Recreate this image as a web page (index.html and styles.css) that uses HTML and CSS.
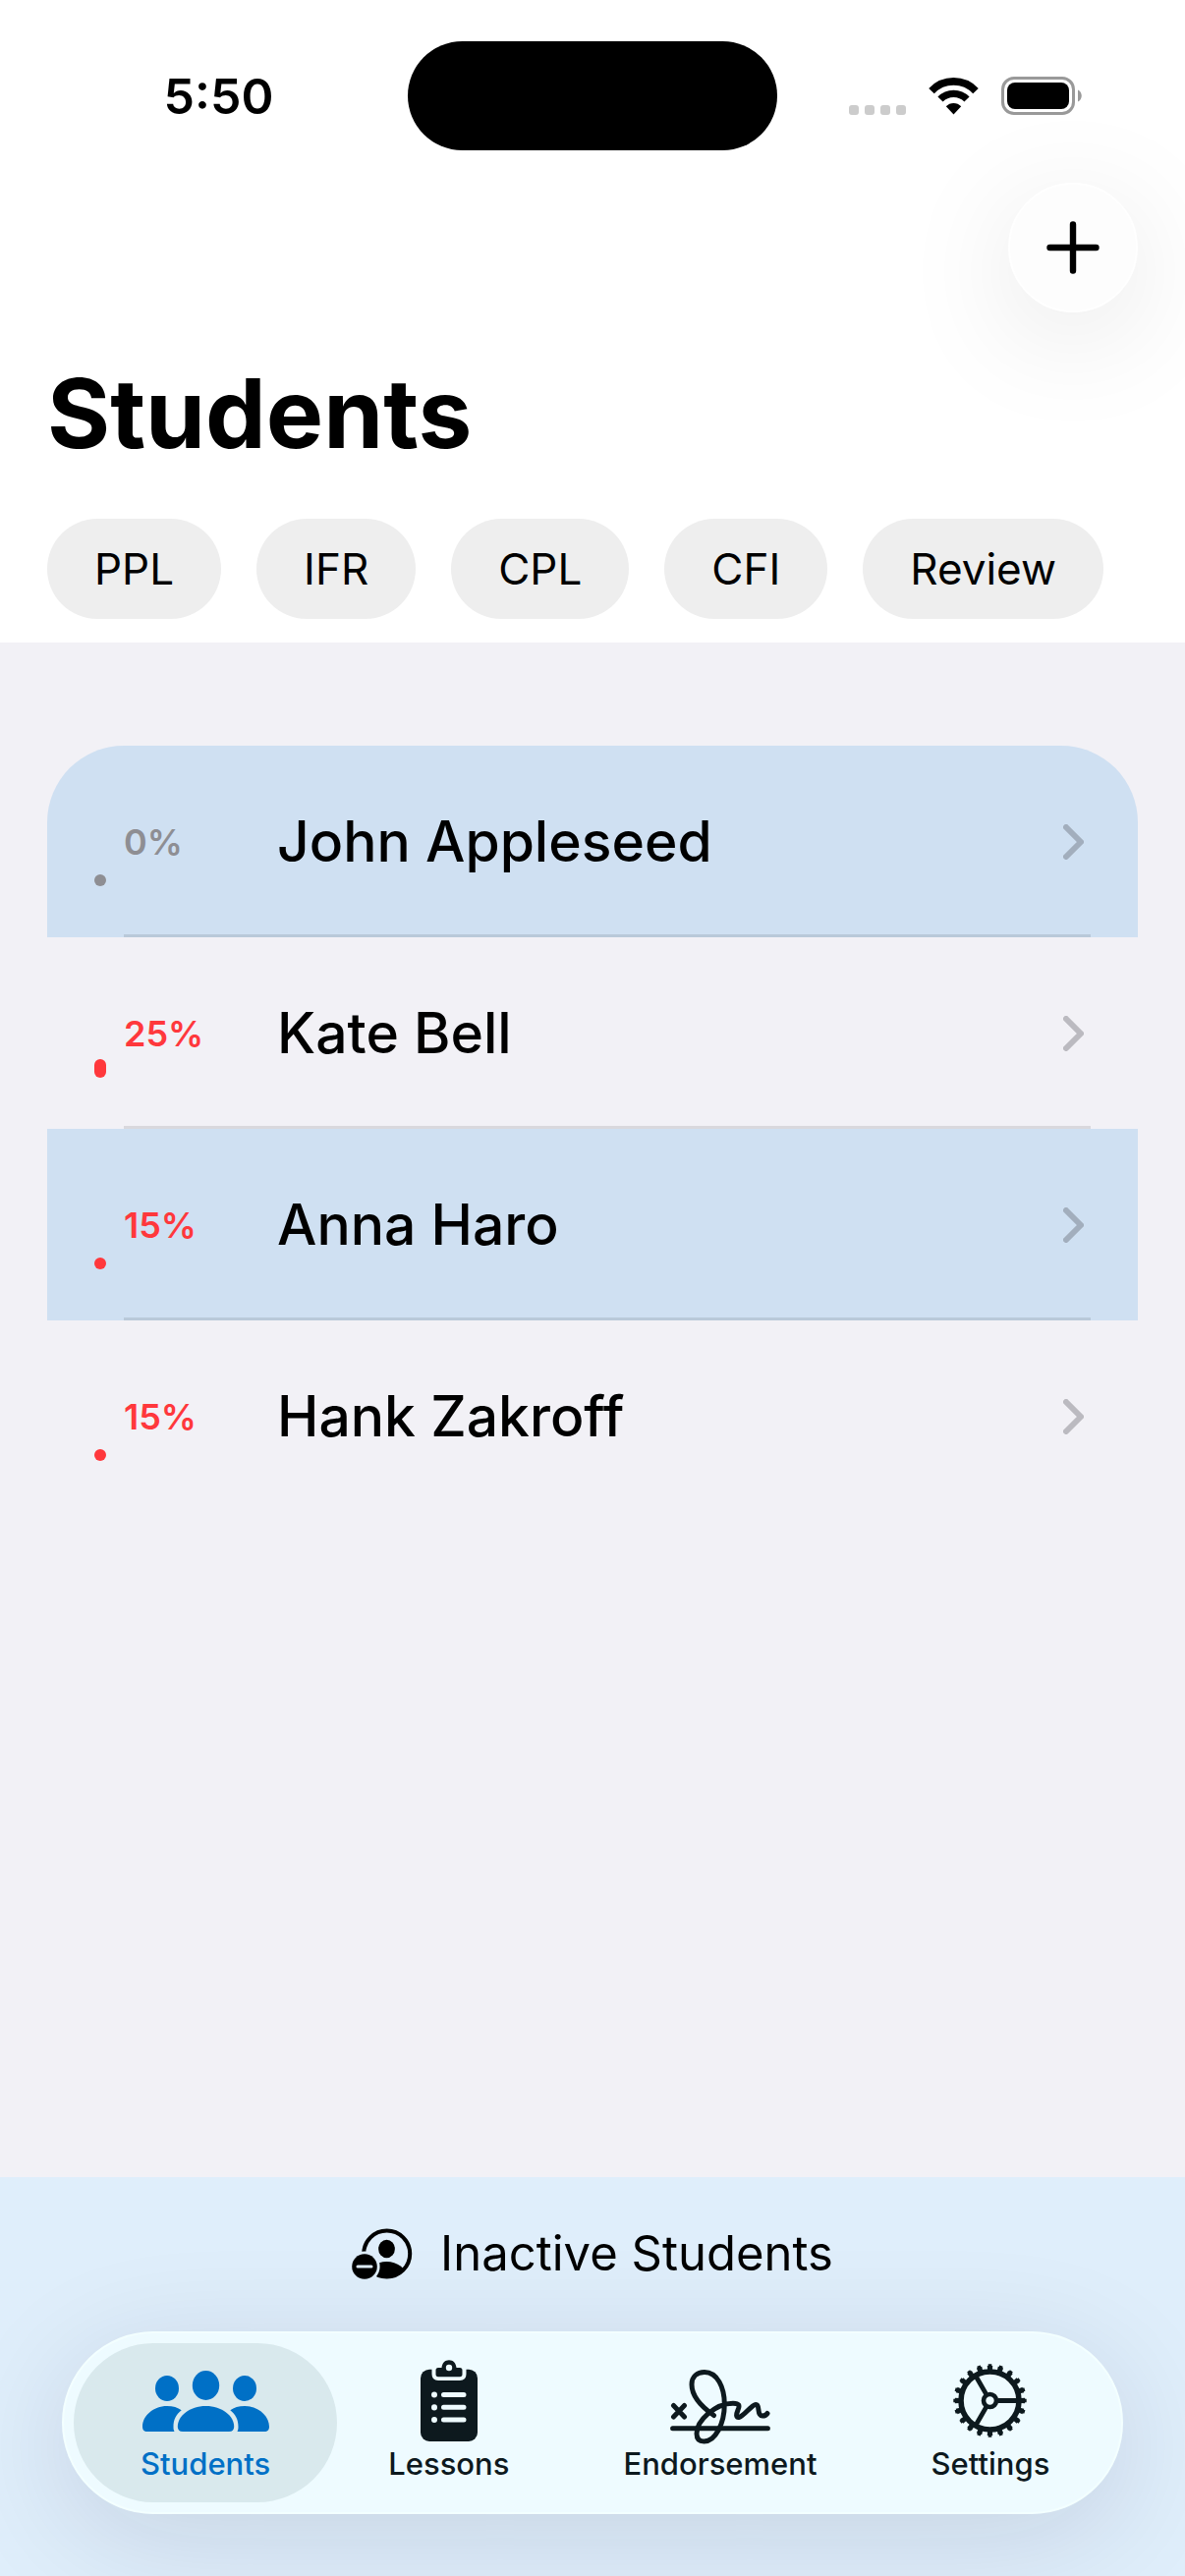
FILE: index.html
```html
<!DOCTYPE html>
<html lang="en">
<head>
	<meta charset="UTF-8">
	<meta name="viewport" content="width=device-width, initial-scale=1">
	<title>Students</title>
	<link rel="stylesheet" href="styles.css">
</head>
<body>
	<header class="header">
		<div class="status">
			<span class="time">5:50</span>
			<span class="island"></span>
			<div class="signals">
				<svg class="dots" width="58" height="10" viewBox="0 0 58 10" fill="#cccccc">
					<rect x="0" width="10" height="10" rx="3"/>
					<rect x="16" width="10" height="10" rx="3"/>
					<rect x="32" width="10" height="10" rx="3"/>
					<rect x="48" width="10" height="10" rx="3"/>
				</svg>
				<svg width="53" height="38" viewBox="0 0 53 38">
					<g fill="none" stroke="#000">
						<path d="M4 13.6A31 31 0 0 1 49 13.6" stroke-width="7.6"/>
						<path d="M13 22A18.8 18.8 0 0 1 40 22" stroke-width="7.2"/>
					</g>
					<path d="M26.5 37.5L18.8 29.3C22.8 24.8 30.2 24.8 34.2 29.3Z"/>
				</svg>
				<svg width="83" height="39" viewBox="0 0 83 39">
					<rect x="1.5" y="1.5" width="72" height="36" rx="11.5" fill="none" stroke="#999" stroke-width="3"/>
					<rect x="6" y="6" width="63" height="27" rx="8"/>
					<path d="M78 13.5C83 15.5 83 23.5 78 25.5Z" fill="#999"/>
				</svg>
			</div>
		</div>
		<div class="toolbar">
			<button class="add" type="button" aria-label="Add student">
				<svg width="54" height="54" viewBox="0 0 54 54" fill="none" stroke="#000" stroke-width="6.4" stroke-linecap="round">
					<path d="M27 3.5V50.5M3.5 27H50.5"/>
				</svg>
			</button>
		</div>
		<h1>Students</h1>
		<div class="filters">
			<button type="button">PPL</button>
			<button type="button">IFR</button>
			<button type="button">CPL</button>
			<button type="button">CFI</button>
			<button type="button">Review</button>
		</div>
	</header>

	<main>
		<ul class="students">
			<li class="none">
				<a href="#john">
					<span class="gauge"><span class="level" style="height: 0%"></span></span>
					<span class="percent">0%</span>
					<span class="name">John Appleseed</span>
					<svg class="chevron" width="21" height="36" viewBox="0 0 21 36"><path d="M3 3L18 18L3 33"/></svg>
				</a>
			</li>
			<li>
				<a href="#kate">
					<span class="gauge"><span class="level" style="height: 25%"></span></span>
					<span class="percent">25%</span>
					<span class="name">Kate Bell</span>
					<svg class="chevron" width="21" height="36" viewBox="0 0 21 36"><path d="M3 3L18 18L3 33"/></svg>
				</a>
			</li>
			<li>
				<a href="#anna">
					<span class="gauge"><span class="level" style="height: 15%"></span></span>
					<span class="percent">15%</span>
					<span class="name">Anna Haro</span>
					<svg class="chevron" width="21" height="36" viewBox="0 0 21 36"><path d="M3 3L18 18L3 33"/></svg>
				</a>
			</li>
			<li>
				<a href="#hank">
					<span class="gauge"><span class="level" style="height: 15%"></span></span>
					<span class="percent">15%</span>
					<span class="name">Hank Zakroff</span>
					<svg class="chevron" width="21" height="36" viewBox="0 0 21 36"><path d="M3 3L18 18L3 33"/></svg>
				</a>
			</li>
		</ul>
	</main>

	<footer class="bottom">
		<button class="inactive" type="button">
			<svg width="62" height="53" viewBox="0 0 62 53">
				<defs>
					<clipPath id="face"><circle cx="35.7" cy="26" r="24"/></clipPath>
					<mask id="badge">
						<rect width="62" height="53" fill="#fff"/>
						<circle cx="13" cy="39" r="15.6" fill="#000"/>
					</mask>
				</defs>
				<g mask="url(#badge)">
					<circle cx="35.7" cy="26" r="23.5" fill="none" stroke="#000" stroke-width="4"/>
					<ellipse cx="35.5" cy="21" rx="8.4" ry="9.2"/>
					<ellipse cx="35.5" cy="49" rx="20" ry="15" clip-path="url(#face)"/>
				</g>
				<circle cx="13" cy="39" r="12.8"/>
				<path d="M6 39H20" stroke="#deecfa" stroke-width="3" stroke-linecap="round"/>
			</svg>
			Inactive Students
		</button>

		<nav class="tabs">
			<a class="tab active" href="#students">
				<svg width="129" height="62" viewBox="0 0 129 62" fill="currentColor">
					<ellipse cx="64.5" cy="15" rx="13.7" ry="15"/>
					<ellipse cx="25" cy="18" rx="12" ry="13"/>
					<ellipse cx="104" cy="18" rx="12" ry="13"/>
					<path d="M41 62C37.500 62 35.800 60 35.800 57C35.800 46 48 36 64.500 36C81 36 93.200 46 93.200 57C93.200 60 91.500 62 88 62Z"/>
					<path d="M5 62C1.500 62 0 60 0 57C0 46 11 36 25 36C31 36 36 37.500 39.700 40.300C34 45 31.500 50 31.500 57C31.500 59 31.700 60.500 32.500 62Z"/>
					<path d="M124 62C127.500 62 129 60 129 57C129 46 118 36 104 36C98 36 93 37.500 89.300 40.300C95 45 97.500 50 97.500 57C97.500 59 97.300 60.500 96.500 62Z"/>
				</svg>
				<span>Students</span>
			</a>
			<a class="tab" href="#lessons">
				<svg width="58" height="83" viewBox="0 0 58 83" fill="currentColor">
					<rect y="9.700" width="58" height="73.300" rx="9"/>
					<path d="M13.500 9V14.500Q13.500 19 18 19H40Q44.500 19 44.500 14.500V9" fill="#eefbff" stroke="#eefbff" stroke-width="4"/>
					<path d="M18 8H21.500C22 3 25 .3 29 .3C33 .3 36 3 36.500 8H40Q42.500 8 42.500 10.500V14.500Q42.500 17.300 40 17.300H18Q15.500 17.300 15.500 14.500V10.500Q15.500 8 18 8Z"/>
					<circle cx="29" cy="8" r="3.2" fill="#eefbff"/>
					<g fill="none" stroke="#eefbff" stroke-width="5" stroke-linecap="round">
						<path d="M23.500 35.500H44M23.500 48.300H44M23.500 61H44"/>
						<path d="M14 35.500V35.600M14 48.300V48.400M14 61V61.100" stroke-width="6"/>
					</g>
				</svg>
				<span>Lessons</span>
			</a>
			<a class="tab" href="#endorsement">
				<svg width="102" height="88" viewBox="0 -12 102 88" fill="none" stroke="currentColor" stroke-width="5" stroke-linecap="round" stroke-linejoin="round">
					<path d="M2.600 59.700H99.400M3.500 36.500L14.500 48M14.500 36.500L3.500 48"/>
					<path d="M44.500 46.500C33 38.500 22 27 22 15C22 7 27.500 2.500 35 2.500C48 2.500 55.300 18 55.300 35C55.300 55 46 73 34.500 73C29 73 27 69.500 27 65C27 52 46 34.200 64 34.200C70.500 34.200 71 36.500 69 41C67 46 67 49 70 48.500C75 47.500 83 35.500 87.300 35.500C92 35.500 87.500 47 94 47C97 47 98 46 99 44.500"/>
				</svg>
				<span>Endorsement</span>
			</a>
			<a class="tab" href="#settings">
				<svg width="75" height="75" viewBox="-37.500 -37.500 75 75" fill="none" stroke="currentColor">
					<circle r="29.500" stroke-width="5.600"/>
					<circle r="33.500" stroke-width="4.400" pathLength="200" stroke-dasharray="5 5" stroke-dashoffset="2.500"/>
					<circle r="36" stroke-width="2.400" pathLength="200" stroke-dasharray="3.200 6.800" stroke-dashoffset="1.600"/>
					<circle r="6.500" stroke-width="4.600"/>
					<path d="M8 0H28M-4 -6.900L-14 -24.200M-4 6.900L-14 24.200" stroke-width="4.800"/>
				</svg>
				<span>Settings</span>
			</a>
		</nav>
	</footer>
</body>
</html>
```

FILE: styles.css
```css
* {
	box-sizing: border-box;
}
body {
	margin: 0;
	min-height: 100vh;
	display: flex;
	flex-direction: column;
	background: #f2f1f6;
	color: #000;
	font-family: Inter, "Liberation Sans", sans-serif;
}
button {
	border: 0;
	padding: 0;
	background: none;
	color: inherit;
	font-family: inherit;
}
a {
	color: inherit;
	text-decoration: none;
}
svg {
	display: block;
	flex: none;
}

/* header */
.header {
	background: #fff;
	padding-bottom: 24px;
	overflow: hidden;
}
.status {
	display: grid;
	grid-template-columns: 1fr auto 1fr;
	align-items: center;
	padding-top: 42px;
}
.time {
	padding-left: 30px;
	text-align: center;
	font-size: 50px;
	line-height: 60px;
	font-weight: 600;
}
.island {
	width: 376px;
	height: 111px;
	border-radius: 56px;
	background: #000;
}
.signals {
	display: flex;
	align-items: center;
	justify-content: center;
	gap: 22px;
	padding-right: 32px;
}
.dots {
	align-self: flex-end;
}
.toolbar {
	display: flex;
	justify-content: flex-end;
	padding: 33px 48px 0;
}
.add {
	display: flex;
	align-items: center;
	justify-content: center;
	width: 132px;
	height: 132px;
	border: 2px solid #fff;
	border-radius: 50%;
	background: #fdfdfd;
	box-shadow: 0 24px 120px rgba(0, 0, 0, 0.1);
}
h1 {
	margin: 43px 48px 47px;
	font-size: 98px;
	line-height: 120px;
	font-weight: 700;
}
.filters {
	display: flex;
	gap: 36px;
	padding: 0 48px;
}
.filters button {
	padding: 0 48px;
	border-radius: 51px;
	background: #eee;
	font-size: 44px;
	line-height: 102px;
}

/* student list */
main {
	flex: 1;
	padding: 105px 48px 48px;
}
.students {
	margin: 0;
	padding: 0;
	list-style: none;
	border-radius: 78px 78px 0 0;
	overflow: hidden;
}
.students li:nth-child(odd) {
	background: #cfe0f2;
}
.students li:nth-child(even) {
	background: #f2f1f6;
}
.students li::after {
	content: "";
	display: block;
	height: 3px;
	margin: 0 48px 0 78px;
	background: rgba(0, 0, 0, 0.1);
}
.students li:last-child::after {
	background: none;
}
.students a {
	display: grid;
	grid-template-columns: 12px 138px 1fr auto;
	gap: 18px;
	align-items: center;
	height: 192px;
	padding: 3px 55px 0 48px;
}
.gauge {
	display: flex;
	align-items: flex-end;
	height: 76px;
	margin-top: 14px;
	color: #ff383c;
}
.level {
	width: 12px;
	min-height: 12px;
	border-radius: 6px;
	background: currentColor;
}
.percent {
	font-size: 36px;
	font-weight: 600;
	color: #ff383c;
}
.none .gauge,
.none .percent {
	color: #8e8e93;
}
.name {
	font-size: 57px;
	font-weight: 500;
}
.chevron {
	fill: none;
	stroke: rgba(60, 60, 67, 0.3);
	stroke-width: 6;
	stroke-linecap: round;
	stroke-linejoin: round;
}

/* bottom */
.bottom {
	display: flex;
	flex-direction: column;
	padding: 48px 63px 63px;
	background: #dfeefb;
	overflow: hidden;
}
.inactive {
	display: flex;
	align-items: center;
	justify-content: center;
	gap: 28px;
	font-size: 49px;
	line-height: 60px;
}
.tabs {
	display: flex;
	height: 186px;
	margin-top: 49px;
	padding: 10px;
	border: 2px solid #f3ffff;
	border-radius: 93px;
	background: #eefbff;
	box-shadow: 0 24px 120px rgba(20, 20, 50, 0.12);
}
.tab {
	flex: 1 0 auto;
	display: flex;
	flex-direction: column;
	align-items: center;
	justify-content: flex-end;
	padding: 12px 64px 21px;
	border-radius: 81px;
	color: #0d191e;
	font-size: 31px;
	line-height: 36px;
	font-weight: 500;
}
.tab + .tab {
	margin-left: -12px;
}
.tab svg {
	margin: auto;
}
.active {
	padding-left: 68px;
	padding-right: 68px;
	background: #d9e9ed;
	color: #0070c6;
}
```
